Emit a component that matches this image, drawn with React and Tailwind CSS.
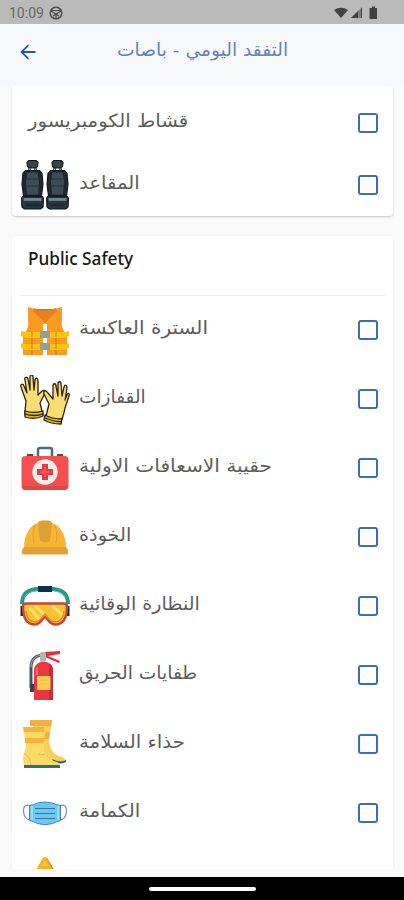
import React from 'react';
import clsx from 'clsx';

const SeatsIcon = () => (
  <svg width="50" height="50" viewBox="0 0 50 50">
    {[0.5, 25.5].map((x) => (
      <g key={x} transform={`translate(${x} -1)`} stroke="#11181d" strokeWidth="1.2" strokeLinejoin="round">
        <path d="M8 7h2v5H8zM14 7h2v5h-2z" fill="#9aa9ab" strokeWidth=".6" />
        <path d="M8.500 1.500h7l2 2-.5 4-2 1.500H9L7 7.500l-.5-4z" fill="#34444b" />
        <path d="M5 11.500h14l2.500 3L22.500 25l-1.500 12H3L1.500 25l1-10.500z" fill="#1d2a30" />
        <path d="M6.500 13h11l1.500 9-1 14H6L5 22z" fill="#3c4d56" strokeWidth=".6" />
        <path d="M5.500 20h13M5.500 27h13" stroke="#1d2a30" strokeWidth=".8" />
        <path d="M2 37.500h20l1 2-.5 8.500-2.500 2H4l-2.500-2L1 39.500z" fill="#26353c" />
        <path d="M3 40.500h18" stroke="#6f8990" strokeWidth="2.800" />
        <path d="M5 46h14" strokeWidth=".8" />
      </g>
    ))}
  </svg>
);

const VestIcon = () => (
  <svg width="50" height="50" viewBox="0 0 50 50">
    <path d="M15 3h20l-10 15z" fill="#d96c18" />
    <path d="M8 1l7 2 9.500 14V49H3V28c5-4 6-8 5-14z" fill="#f99b20" />
    <path d="M42 1l-7 2-10 14v32h22V28c-5-4-6-8-5-14z" fill="#f99b20" />
    <path d="M14 2l3 1q8 3 16 0l3-1 1 3-12 12L13 5z" fill="#e8801b" />
    <path d="M23.500 18h3.500v31h-4v-31z" fill="#fff" />
    <path d="M12 28v21M36 28v21" stroke="#e57d18" strokeWidth="1.500" />
    <path d="M1 25l4 1h40l4-1v5l-4 2H5l-4-2zM1 37l4 1h40l4-1v5l-4 2H5l-4-2z" fill="#f9c414" />
    <path d="M12 26v5M36 26v5M12 38v5M36 38v5" stroke="#e8a20e" strokeWidth="2" />
    <path d="M20 25h10v7H20zM20 37h10v7H20z" fill="#8f9f9d" />
  </svg>
);

const GlovesIcon = () => (
  <svg width="50" height="50" viewBox="0 0 50 50" stroke="#29230f" strokeWidth="1.300" strokeLinejoin="round">
    <path
      d="M5 36l1-10-5-14c-1-3 2-4 3-1l3 7L5 5c-1-3 2-4 3-1l2 11V2c0-3 3-3 3 0l1 13 1-10c1-3 3-2 3 1v14l4-4c3-2 5 1 2 4l-4 8 3 12c-5 2-13 2-18 0z"
      fill="#f9dc72"
    />
    <path d="M5 36c6 2 11 2 18 0v5c-6 3-12 3-18 1z" fill="#e9b928" />
    <path d="M5 39c6 2 12 2 18 0" fill="none" />
    <path
      d="M26 41l3-12-5-10c-1-4 2-4 4-1l5 6V11c0-3 3-3 3 0l2 10V9c0-3 3-3 3 0l1 12 2-9c1-3 3-2 3 1l-2 12 2-5c1-3 3-2 2 1l-4 12c-1 6-2 8-3 11-6 1-11 0-16-3z"
      fill="#f9dc72"
    />
    <path d="M25 40c5 3 10 4 17 4l-1 5c-6 0-12-1-17-4z" fill="#e9b928" />
    <path d="M25 43c5 2 10 4 16 3.500" fill="none" />
  </svg>
);

const FirstAidIcon = () => (
  <svg width="50" height="50" viewBox="0 0 50 50">
    <path d="M18 13V6q0-2 2-2h10q2 0 2 2v7" fill="none" stroke="#426f85" strokeWidth="2.500" />
    <path d="M7 10h6v3H7zM37 10h6v3h-6z" fill="#6c4147" />
    <rect x="1.500" y="12" width="47" height="34" rx="4" fill="#f4504f" />
    <path d="M2 42h46q-1 4-4 4H6q-4 0-4-4" fill="#e04548" />
    <circle cx="25" cy="28" r="12.700" fill="#ededed" />
    <path d="M22 20h6v5h5v6h-5v5h-6v-5h-5v-6h5z" fill="#e53b3d" />
    <path d="M24 23h2v4h4v2h-4v4h-2v-4h-4v-2h4z" fill="#f1595b" />
  </svg>
);

const HelmetIcon = () => (
  <svg width="50" height="50" viewBox="0 0 50 50">
    <path d="M4 35C4 21 10 12 20 9h10c10 3 16 12 16 26z" fill="#f8b435" />
    <path d="M18 10q1-2.500 3-2.500h8q2 0 3 2.500l-2 18q-5 3-10 0z" fill="#dda034" />
    <path d="M15 12q-3 9-1 18M35 12q3 9 1 18" fill="none" stroke="#e7a332" strokeWidth="1.200" />
    <path d="M4 34h42l2 3v3q0 1.500-2 1.500H4q-2 0-2-1.500v-3z" fill="#e1a337" />
  </svg>
);

const GogglesIcon = () => (
  <svg width="50" height="50" viewBox="0 0 50 50">
    <path d="M2 22C2 13 7 8 16 7h18c9 1 14 6 14 15" fill="none" stroke="#279987" strokeWidth="4" />
    <path d="M4 16q3-6 12-7M46 16q-3-6-12-7" fill="none" stroke="#5cbca7" strokeWidth="1" />
    <path d="M18 4h14v6H18z" fill="#102f48" />
    <path d="M.500 24h5v10h-5zM44.500 24h5v10h-5z" fill="#102a3c" />
    <path
      d="M6 21.500h38q3 0 3 3c0 12-4 18-12 18-5 0-7-5-10-8-3 3-5 8-10 8-8 0-12-6-12-18q0-3 3-3z"
      fill="#fac332"
      stroke="#bf4934"
      strokeWidth="2.500"
    />
    <path d="M10 26l10 12M15 24l10 9M32 24l11 9" stroke="#fde06b" strokeWidth="3" />
    <path d="M6 29q1 11 10 11 4-1 9-8 5 7 9 8 9 0 10-11" fill="none" stroke="#e98a2d" strokeWidth="1.500" />
  </svg>
);

const ExtinguisherIcon = () => (
  <svg width="50" height="50" viewBox="0 0 50 50">
    <path d="M24 4c-10 0-13 5-13 13v20" fill="none" stroke="#46515a" strokeWidth="3" />
    <path d="M23 4c-7 0-12 4-12 12" fill="none" stroke="#a4b0ba" strokeWidth="1" />
    <path d="M10 33h4v8h-4z" fill="#39434c" />
    <path d="M24 1l16-1v3L28 5l12 5-1 2-14-6z" fill="#dc333d" />
    <rect x="20" y="1" width="6" height="10" rx="2" fill="#adb7bd" />
    <path d="M14 19q0-5 6-8h7q6 3 6 8v30H14z" fill="#e9383f" />
    <path d="M29 12q4 3 4 7v30h-4z" fill="#c92c38" />
    <path d="M17 17v7" stroke="#f68282" strokeWidth="1.500" />
    <rect x="17" y="25" width="13.500" height="14" rx="1" fill="#f8cf52" />
    <path d="M19 29h9M19 33h9" stroke="#f3b83a" strokeWidth="1" />
  </svg>
);

const BootsIcon = () => (
  <svg width="50" height="50" viewBox="0 0 50 50">
    <path d="M10 0h22l-1 7-2 14c1 9 5 14 13 16 3 1 4 3 4 5-5 2-13 0-19-4z" fill="#f7cf5b" />
    <path d="M10 0h22l-1 6H10zM26 12h4l-1 7h-5z" fill="#f6ae3e" />
    <path d="M32 39q8 4 14 1v2q-6 3-12 0z" fill="#256e85" />
    <path d="M3 7h21v23c1 8 6 10 13 12 2 1 3 3 3 5H4l-1-9 3-12z" fill="#f9db65" />
    <path d="M3 7h21v5H4zM5 18h19v5H5z" fill="#f6b243" />
    <path d="M4 34q6 1 7 12M25 34q-4 1-6 0" fill="none" stroke="#e8b84a" strokeWidth="1" />
    <path d="M4 45h36v3H4z" fill="#256e85" />
  </svg>
);

const MaskIcon = () => (
  <svg width="50" height="50" viewBox="0 0 50 50">
    <path d="M10 16.500q-7-2-6.500 6.500 1 8 7.500 8M40 16.500q7-2 6.500 6.500-1 8-7.500 8" fill="none" stroke="#7f90bf" strokeWidth="1.300" />
    <path
      d="M9.500 16.500q4-.5 8-2.500 7.500-2 15 0 4 2 8 2.500v15q-4 1-8 3-7.500 2.500-15 0-4-2-8-3z"
      fill="#69c9f0"
      stroke="#547fbd"
      strokeWidth="1"
    />
    <path d="M12 17v14M38 17v14" stroke="#a7e4fa" strokeWidth="1.500" />
    <path d="M15 19.500h20M15 24.500h20M15 29.500h20" stroke="#3972a9" strokeWidth="1.200" />
  </svg>
);

const WarningIcon = () => (
  <svg width="50" height="50" viewBox="0 0 50 50">
    <path d="M22.500 1.500q2.500-3 5 0L49 39q1 4-3 4H4q-4 0-3-4z" fill="#f8b51f" />
    <path d="M26 0l1.500 1.500L49 39q1 4-3 4z" fill="#e8931c" />
    <path d="M25 4l3 5h-6z" fill="#fbd03e" />
  </svg>
);

const vehicleItems = [
  { label: 'قشاط الكومبريسور', width: 'scale-x-[1.095]' },
  { label: 'المقاعد', width: 'scale-x-[1.09]', icon: SeatsIcon },
];

const safetyItems = [
  { label: 'السترة العاكسة', width: 'scale-x-[1.112]', icon: VestIcon },
  { label: 'القفازات', width: 'scale-x-[1.03]', icon: GlovesIcon },
  { label: 'حقيبة الاسعافات الاولية', width: 'scale-x-[1.12]', icon: FirstAidIcon },
  { label: 'الخوذة', width: 'scale-x-[1.07]', icon: HelmetIcon },
  { label: 'النظارة الوقائية', width: 'scale-x-[1.06]', icon: GogglesIcon },
  { label: 'طفايات الحريق', width: 'scale-x-[1.035]', icon: ExtinguisherIcon },
  { label: 'حذاء السلامة', width: 'scale-x-[1.1]', icon: BootsIcon },
  { label: 'الكمامة', width: 'scale-x-[1.1]', icon: MaskIcon },
];

const CheckRow = ({ item, className }) => {
  const Icon = item.icon;
  return (
    <div className={clsx('flex shrink-0 items-center pl-2 pr-[15.500px]', className)}>
      {Icon && (
        <div className="mr-[9px] h-[50px] w-[50px] shrink-0">
          <Icon />
        </div>
      )}
      <span
        dir="rtl"
        className={clsx(
          'mb-[5px] origin-left whitespace-nowrap text-[18px] leading-6 text-[#5c5c5c]',
          !Icon && 'ml-2',
          item.width
        )}
      >
        {item.label}
      </span>
      <span className="mb-px ml-auto h-5 w-5 shrink-0 rounded-[3px] border-2 border-[#3c70ac]"></span>
    </div>
  );
};

const StatusBar = () => (
  <div className="flex h-6 shrink-0 items-center bg-[#bababa] pl-[9px] pr-[26px] pt-px">
    <span className="font-[Roboto] text-[14px] leading-none text-[#666]">10:09</span>
    <svg className="ml-[5px]" width="14" height="14" viewBox="0 0 14 14" fill="none" stroke="#4c4c4c" strokeWidth="1.500">
      <circle cx="7" cy="7" r="5.800" />
      <path d="M2 5l5 3 5-3M7 8v5M3 4.500h8M4 10l3-2 3 2" strokeWidth="1.200" />
    </svg>
    <svg className="ml-auto" width="44" height="14" viewBox="0 0 44 14" fill="#414141">
      <path d="M0 4Q7-.500 14 4L7 12z" />
      <path d="M28 1v11H17z" fill="#818181" />
      <path d="M24 5v7h-7zM27 2h1v10h-1z" />
      <path d="M35.500 2H38V.500h3V2h2v11h-7.500z" />
    </svg>
  </div>
);

const App = () => (
  <div className="flex h-[900px] w-[404px] flex-col overflow-hidden bg-[#fafafa] font-['DejaVu_Sans',sans-serif]">
    <StatusBar />

    {/* Header */}
    <header className="flex h-[62px] shrink-0 items-center bg-[#f8f9fa] pl-[20px]">
      <svg className="mb-[7px]" width="16" height="16" viewBox="0 0 16 16" fill="none" stroke="#2859a6" strokeWidth="1.800">
        <path d="M8.500 1.200L1.500 8l7 6.800M1.500 8h14" />
      </svg>
      <h1
        dir="rtl"
        className="mb-[11px] ml-[81px] origin-left scale-x-[1.035] whitespace-nowrap text-[18px] leading-6 text-[#6083bd]"
      >
        التفقد اليومي - باصات
      </h1>
    </header>

    {/* Checklist */}
    <main className="flex h-[783px] shrink-0 flex-col gap-5 overflow-hidden pl-3 pr-[11px]">
      <section className="flex h-[130px] shrink-0 flex-col rounded-[4px] bg-white pt-[6px] shadow-[0_1px_2px_rgba(0,0,0,0.2)]">
        {vehicleItems.map((item) => (
          <CheckRow key={item.label} item={item} className="h-[62px]" />
        ))}
      </section>

      <section className="flex h-[700px] shrink-0 flex-col rounded-[4px] bg-white shadow-[0_0_2px_rgba(0,0,0,0.08)]">
        <div className="mx-2 flex h-[60px] shrink-0 items-center border-b border-[#eee] pb-[13px] pl-2">
          <h2 className="font-['Noto_Sans',sans-serif] text-[17.200px] font-medium text-[#171717]">Public Safety</h2>
        </div>
        {safetyItems.map((item) => (
          <CheckRow key={item.label} item={item} className="h-[69px]" />
        ))}
        <div className="pl-2 pt-[9px]">
          <WarningIcon />
        </div>
      </section>
    </main>

    {/* System navigation */}
    <div className="mt-auto flex h-[23px] shrink-0 items-center justify-center bg-black">
      <div className="h-1 w-[107px] rounded-full bg-white"></div>
    </div>
  </div>
);

export default App;
